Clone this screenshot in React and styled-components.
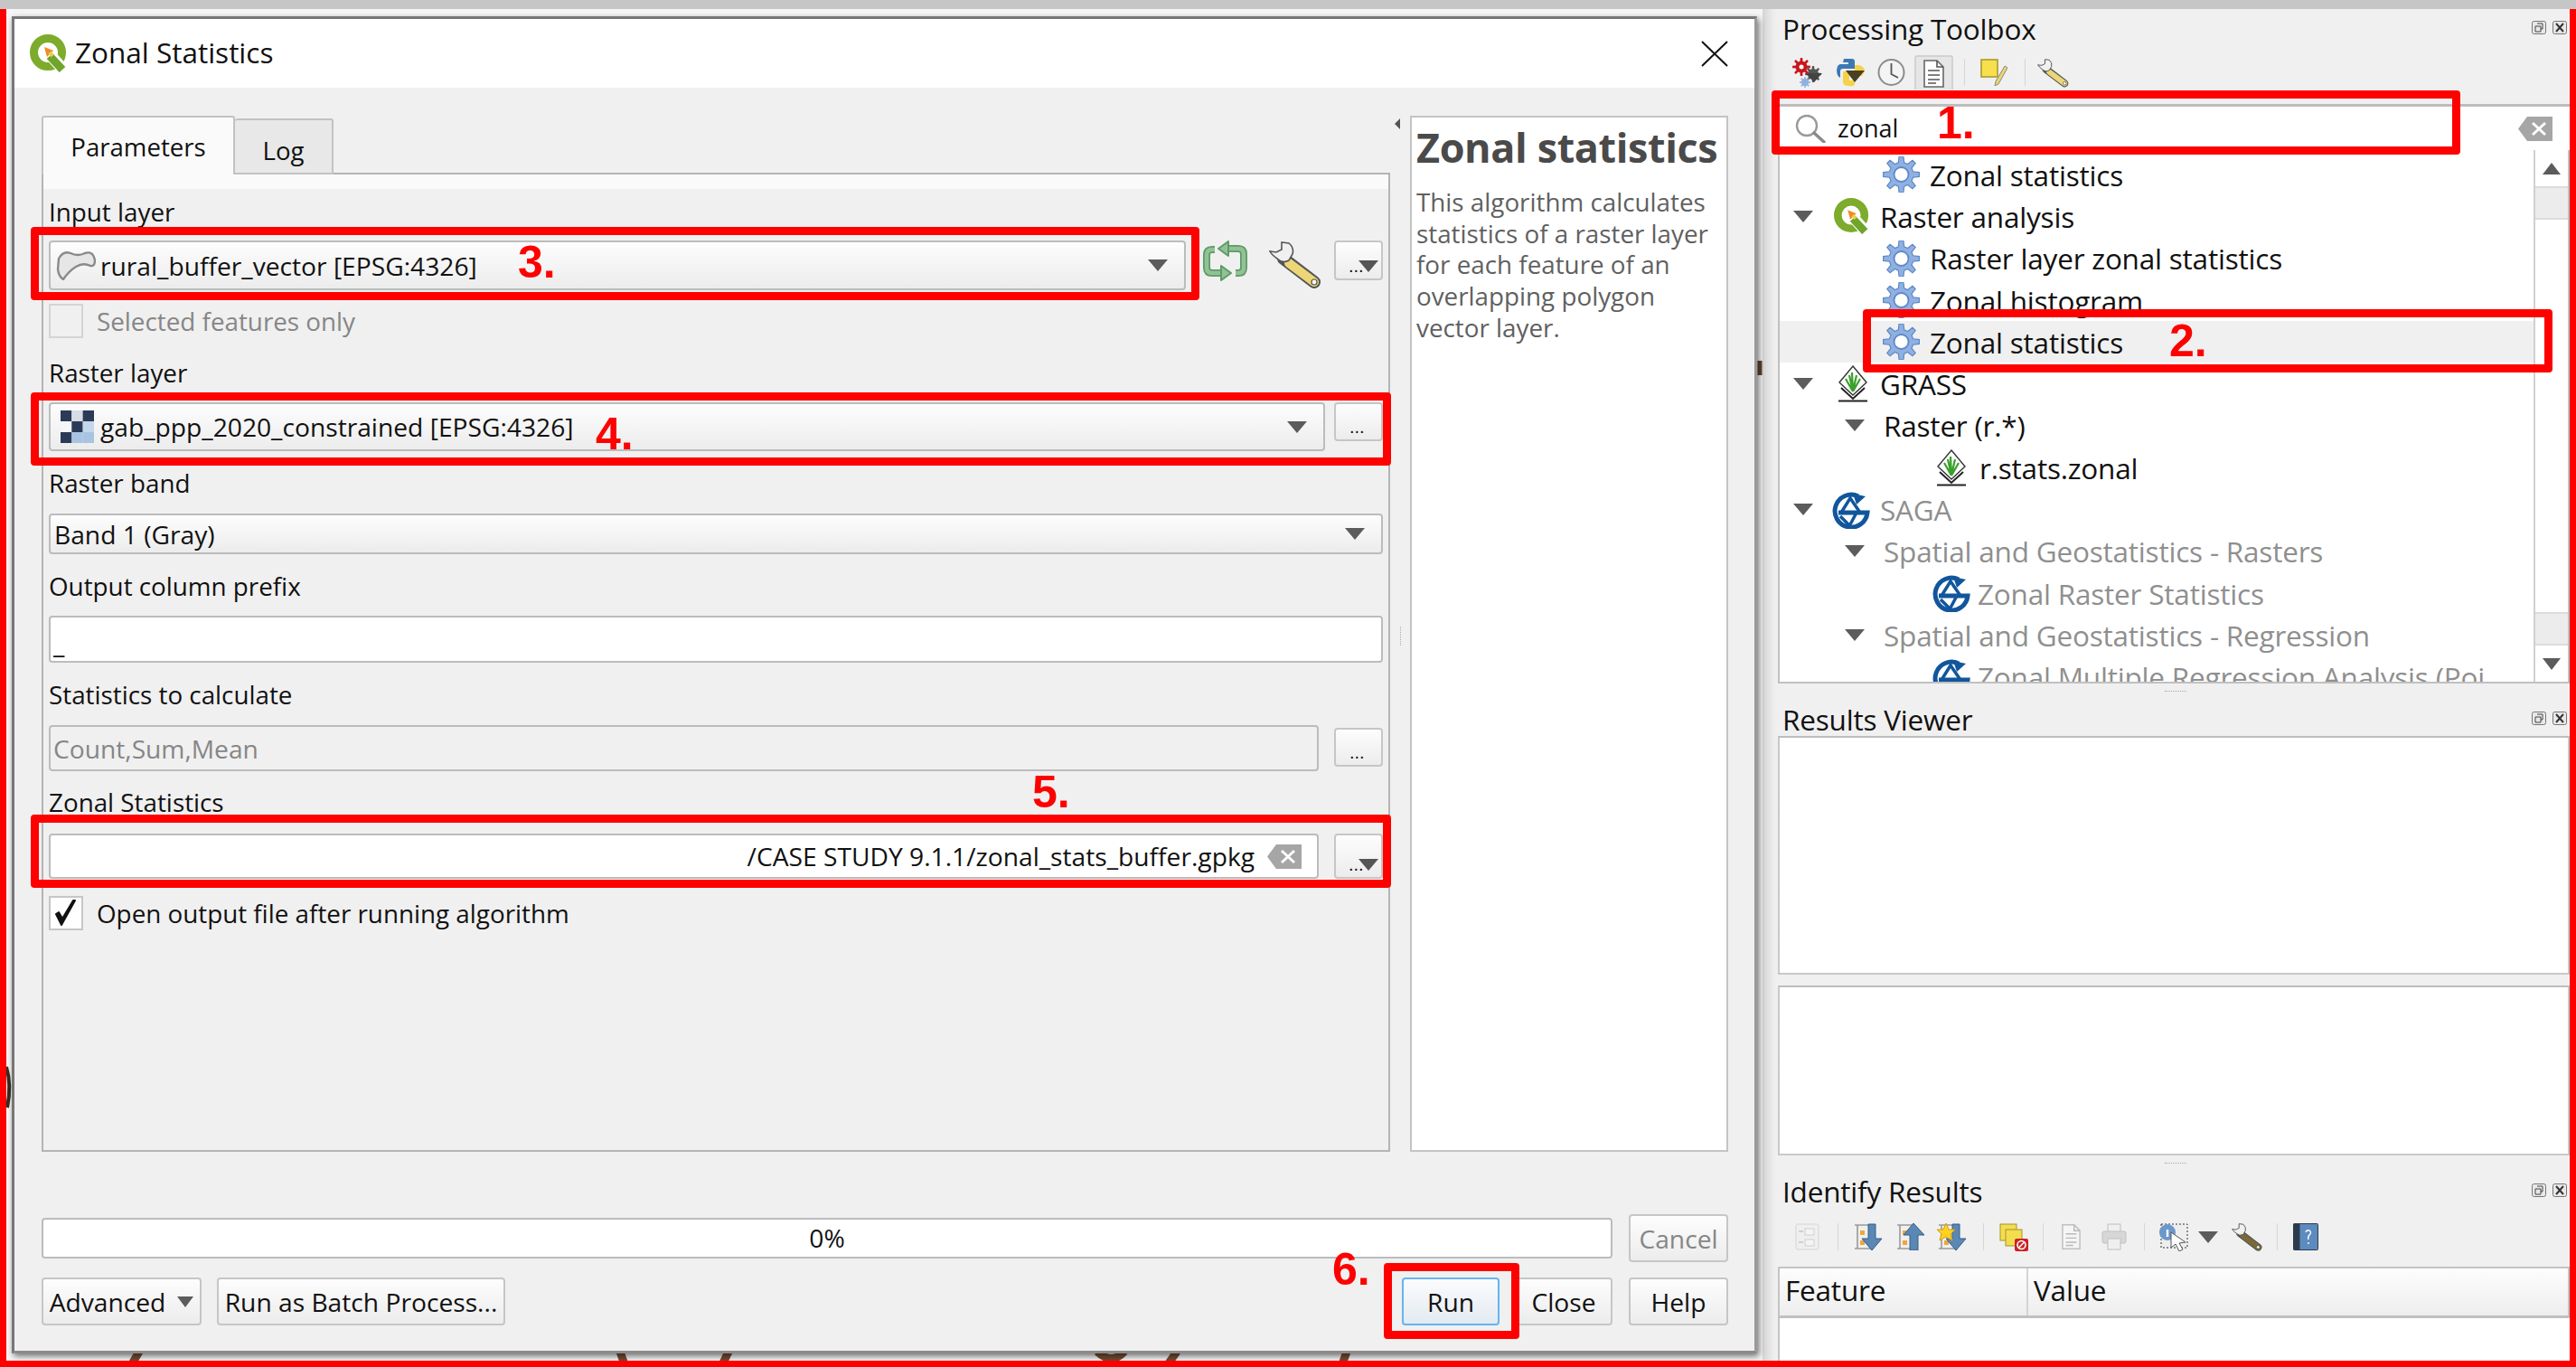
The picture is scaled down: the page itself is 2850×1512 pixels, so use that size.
import React from 'react';
import styled, { createGlobalStyle } from 'styled-components';

const GlobalStyle = createGlobalStyle`
    html, body {
        margin: 0;
        padding: 0;
        background: #fff;
    }
    * {
        box-sizing: border-box;
    }
`;

const FONT = '"Open Sans", "Noto Sans", "Liberation Sans", sans-serif';

const Screen = styled.div`
    position: relative;
    display: flex;
    width: 2850px;
    height: 1512px;
    overflow: hidden;
    border-top: 10px solid #c6c6c6;
    font-family: ${FONT};
    font-size: 28.2px;
    color: #111;
`;

/* map canvas with the dialog floating on it */
const Canvas = styled.div`
    position: relative;
    flex: 0 0 1950px;
    padding: 8px 0 0 13px;
    background: #f6f6f6;
`;

const MapSketch = styled.svg`
    position: absolute;
    left: 0;
    top: -10px;
`;

const Dialog = styled.div`
    position: relative;
    display: flex;
    flex-direction: column;
    width: 1931px;
    height: 1479px;
    border: 3px solid #777;
    border-right-color: #9a9a9a;
    border-bottom-color: #8a8a8a;
    box-shadow: 2px 3px 7px rgba(0, 0, 0, 0.55);
`;

const TitleBar = styled.div`
    display: flex;
    flex: 0 0 76px;
    align-items: center;
    padding: 0 29px 0 17px;
    background: #fff;
`;

const WindowTitle = styled.div`
    flex: 1;
    margin: -4px 0 0 8px;
    font-size: 31.5px;
`;

const DialogBody = styled.div`
    display: flex;
    flex: 1;
    flex-direction: column;
    padding: 31px 29px 0 30px;
    background: #f0f0f0;
`;

const MainRow = styled.div`
    display: flex;
    height: 1146px;
`;

const TabColumn = styled.div`
    display: flex;
    flex: 0 0 1492px;
    flex-direction: column;
`;

const TabBar = styled.div`
    display: flex;
    flex: 0 0 63px;
    align-items: flex-end;
`;

const Tab = styled.div`
    position: relative;
    z-index: 1;
    display: flex;
    align-items: center;
    justify-content: center;
    width: ${p => p.$w}px;
    height: ${p => (p.$active ? 65 : 62)}px;
    margin-bottom: -2px;
    padding-top: ${p => (p.$active ? 0 : 8)}px;
    border: 2px solid #c2c2c2;
    border-bottom: ${p => (p.$active ? 'none' : '2px solid #c2c2c2')};
    border-left: ${p => (p.$active ? '2px solid #c2c2c2' : 'none')};
    border-radius: 3px 3px 0 0;
    background: ${p => (p.$active ? '#fafafa' : '#e8e8e8')};
    font-size: 27.6px;
`;

const Pane = styled.div`
    display: flex;
    flex: 1;
    flex-direction: column;
    border: 2px solid #b4b4b4;
    background: #f0f0f0;
`;

const PaneTop = styled.div`
    flex: 0 0 16px;
    background: #fafafa;
`;

const PaneContent = styled.div`
    display: flex;
    flex-direction: column;
    padding: 0 6px;
`;

const Label = styled.div`
    height: 34px;
    margin-top: ${p => p.$mt}px;
    font-size: 27.8px;
    line-height: 32px;
    white-space: nowrap;
`;

const FieldRow = styled.div`
    display: flex;
    align-items: flex-start;
    margin-top: ${p => p.$mt}px;
`;

const Combo = styled.div`
    display: flex;
    flex: 1;
    align-items: center;
    height: ${p => p.$h}px;
    padding: 0 18px 0 ${p => p.$pad}px;
    border: 2px solid #bcbcbc;
    border-radius: 4px;
    background: linear-gradient(#fdfdfd, #ececec);
    white-space: nowrap;
`;

const ComboText = styled.span`
    flex: 1;
    margin-left: ${p => p.$ml || 0}px;
`;

const DownArrow = styled.div`
    flex: none;
    width: 0;
    height: 0;
    border-top: ${p => p.$h || 13}px solid #5c5c5c;
    border-left: ${p => (p.$w || 22) / 2}px solid transparent;
    border-right: ${p => (p.$w || 22) / 2}px solid transparent;
`;

const LineEdit = styled.div`
    display: flex;
    flex: 1;
    align-items: ${p => (p.$bottom ? 'flex-end' : 'center')};
    justify-content: ${p => (p.$right ? 'flex-end' : 'flex-start')};
    height: ${p => p.$h}px;
    padding: 0 ${p => (p.$right ? 17 : 3)}px 0 3px;
    border: 2px solid #bcbcbc;
    border-radius: 4px;
    background: ${p => (p.$disabled ? '#f0f0f0' : '#fff')};
    color: ${p => (p.$disabled ? '#868686' : '#111')};
    line-height: 38px;
    white-space: nowrap;
`;

const DotsButton = styled.div`
    position: relative;
    flex: 0 0 54px;
    height: ${p => p.$h}px;
    margin: ${p => p.$mt || 0}px 0 0 ${p => p.$ml || 0}px;
    border: 2px solid #c6c6c6;
    border-radius: 4px;
    background: linear-gradient(#fdfdfd, #ececec);
`;

const Dots = styled.span`
    position: absolute;
    left: ${p => (p.$menu ? 14 : 15)}px;
    bottom: 7px;
    font-family: "Liberation Sans", sans-serif;
    font-size: 20px;
    line-height: 14px;
`;

const MenuArrow = styled.div`
    position: absolute;
    right: 3px;
    bottom: 7px;
    width: 0;
    height: 0;
    border-top: 13px solid #555;
    border-left: 11px solid transparent;
    border-right: 11px solid transparent;
`;

const CheckRow = styled.div`
    display: flex;
    align-items: center;
    gap: 15px;
    margin-top: ${p => p.$mt}px;
    font-size: 27.8px;
    color: ${p => (p.$disabled ? '#868686' : '#111')};
`;

const CheckBox = styled.div`
    display: flex;
    align-items: center;
    justify-content: center;
    width: 38px;
    height: 38px;
    border: 2px solid ${p => (p.$disabled ? '#d4d4d4' : '#c6c6c6')};
    background: ${p => (p.$disabled ? '#f0f0f0' : '#fff')};
`;

const Splitter = styled.div`
    position: relative;
    flex: 0 0 22px;
`;

const CollapseArrow = styled.div`
    position: absolute;
    left: 5px;
    top: 3px;
    width: 0;
    height: 0;
    border-right: 6px solid #555;
    border-top: 6px solid transparent;
    border-bottom: 6px solid transparent;
`;

const GripColumn = styled.div`
    position: absolute;
    left: 11px;
    top: 565px;
    width: 1px;
    height: 21px;
    border-left: 1px dotted #aaa;
`;

const HelpPanel = styled.div`
    flex: 0 0 352px;
    padding: 10px 4px 0 5px;
    border: 2px solid #c4c4c4;
    background: #fff;
    color: #606060;
`;

const HelpTitle = styled.h2`
    margin: 0 0 20px;
    font-size: 45px;
    font-weight: 700;
    line-height: 46px;
    letter-spacing: -0.4px;
    color: #4a4a4a;
    white-space: nowrap;
`;

const HelpText = styled.p`
    margin: 0;
    line-height: 34.7px;
    font-size: 27.8px;
`;

const ProgressRow = styled.div`
    display: flex;
    align-items: center;
    gap: 18px;
    margin-top: 69px;
`;

const Progress = styled.div`
    flex: 1;
    height: 45px;
    border: 2px solid #bcbcbc;
    border-radius: 4px;
    background: #fff;
    line-height: 41px;
    text-align: center;
`;

const ButtonRow = styled.div`
    display: flex;
    gap: 17px;
    margin-top: 17px;
`;

const Spacer = styled.div`
    flex: 1;
`;

const Button = styled.div`
    display: flex;
    flex: 0 0 ${p => p.$w}px;
    align-items: center;
    justify-content: center;
    gap: 13px;
    height: ${p => p.$h || 53}px;
    margin-right: ${p => p.$mr || 0}px;
    border: 2px solid ${p => (p.$primary ? '#66b4f0' : '#c6c6c6')};
    border-radius: 4px;
    background: ${p => (p.$primary ? 'linear-gradient(#fbfcfd, #e3eaf1)' : 'linear-gradient(#fdfdfd, #ececec)')};
    color: ${p => (p.$disabled ? '#868686' : '#111')};
    white-space: nowrap;
`;

/* docked panels on the right */
const Dock = styled.div`
    display: flex;
    flex: 1;
    flex-direction: column;
    padding: 0 7px 0 17px;
    background: linear-gradient(90deg, #d6d6d6 0, #ececec 12px, #f0f0f0 16px);
    font-size: 31.5px;
    letter-spacing: -0.2px;
`;

const DockTitle = styled.div`
    display: flex;
    flex: 0 0 ${p => p.$h}px;
    align-items: center;
    justify-content: space-between;
    padding: ${p => p.$pt || 0}px 3px 0 5px;
    line-height: 34px;
`;

const DockTitleText = styled.span`
    margin-top: -2px;
`;

const FloatButtons = styled.div`
    display: flex;
    gap: 7px;
    margin-top: -6px;
`;

const ToolBar = styled.div`
    display: flex;
    flex: 0 0 ${p => p.$h}px;
    align-items: center;
    margin-top: ${p => p.$mt}px;
    margin-left: -17px;
    padding-left: ${p => p.$pad}px;
`;

const ToolSlot = styled.div`
    display: flex;
    flex: none;
    align-items: center;
    justify-content: center;
    margin-left: ${p => p.$ml || 0}px;
`;

const ToolActive = styled(ToolSlot)`
    width: 43px;
    height: 38px;
    border: 2px solid #d2d2d2;
    border-bottom: none;
    border-radius: 3px 3px 0 0;
    background: #e6e6e6;
`;

const ToolSep = styled.div`
    flex: none;
    width: 1px;
    height: 30px;
    margin-left: ${p => p.$ml}px;
    background: #d6d6d6;
`;

const SearchBox = styled.div`
    display: flex;
    flex: 0 0 51px;
    align-items: center;
    margin-top: 16px;
    padding: 0 19px;
    border-top: 3px solid #bdbdbd;
    background: #fff;
`;

const SearchText = styled.span`
    flex: 1;
    margin: -2px 0 0 13px;
    font-size: 27px;
    letter-spacing: 0;
`;

const Tree = styled.div`
    display: flex;
    flex: none;
    height: 590px;
    min-height: 0;
    overflow: hidden;
    border: 2px solid #c0c0c0;
    border-top: none;
    background: #fff;
`;

const TreeList = styled.div`
    flex: 1;
    min-width: 0;
    height: 100%;
    padding-top: 4px;
    overflow: hidden;
`;

const TreeRow = styled.div`
    display: flex;
    align-items: center;
    gap: ${p => p.$gap}px;
    height: 46.3px;
    padding-left: ${p => p.$pad}px;
    background: ${p => (p.$selected ? '#f0f0f0' : 'transparent')};
    color: ${p => (p.$muted ? '#8f8f8f' : '#111')};
    white-space: nowrap;
`;

const TreeLabel = styled.span`
    margin-left: ${p => p.$ml}px;
`;

const ScrollBar = styled.div`
    display: flex;
    flex: 0 0 38px;
    flex-direction: column;
    border-left: 2px solid #d0d0d0;
`;

const ScrollEnd = styled.div`
    display: flex;
    flex: 0 0 40px;
    align-items: center;
    justify-content: center;
`;

const UpArrow = styled.div`
    width: 0;
    height: 0;
    border-bottom: 13px solid #5c5c5c;
    border-left: 10px solid transparent;
    border-right: 10px solid transparent;
`;

const ScrollThumb = styled.div`
    flex: 0 0 ${p => p.$h}px;
    border-top: 2px solid #dcdcdc;
    border-bottom: 2px solid #dcdcdc;
    background: #ececec;
`;

const ScrollTrack = styled.div`
    flex: 1;
`;

const Grip = styled.div`
    flex: 0 0 18px;
    padding-top: 8px;
    padding-left: 428px;
    font-size: 0;
`;

const GripDots = styled.div`
    width: 24px;
    border-top: 1px dotted #aaa;
`;

const WhitePanel = styled.div`
    flex: 0 0 ${p => p.$h}px;
    margin-top: ${p => p.$mt || 0}px;
    border: 2px solid #c8c8c8;
    border-top-color: #bdbdbd;
    background: #fff;
`;

const TableHead = styled.div`
    display: flex;
    flex: 0 0 57px;
    margin-top: 13px;
    border: 2px solid #c4c4c4;
    border-bottom: 3px solid #c0c0c0;
    background: linear-gradient(#fdfdfd, #eeeeee);
`;

const HeadCell = styled.div`
    flex: ${p => (p.$w ? `0 0 ${p.$w}px` : 1)};
    padding: 2px 0 0 6px;
    border-right: ${p => (p.$w ? '2px solid #d4d4d4' : 'none')};
    line-height: 44px;
`;

const TableBody = styled.div`
    flex: 1;
    border-left: 2px solid #c4c4c4;
    background: #fff;
`;

/* red annotations lying over the screenshot */
const RedFrame = styled.div`
    position: absolute;
    inset: -10px 0 0 0;
    z-index: 5;
    border: 7px solid #ff0000;
    pointer-events: none;
`;

const RedBox = styled.div`
    position: absolute;
    z-index: 6;
    left: ${p => p.$x}px;
    top: ${p => p.$y - 10}px;
    width: ${p => p.$w}px;
    height: ${p => p.$h}px;
    border: 9px solid #ff0000;
    border-radius: 4px;
`;

const RedNumber = styled.div`
    position: absolute;
    z-index: 6;
    left: ${p => p.$x}px;
    top: ${p => p.$y - 10}px;
    font-family: "Liberation Sans", sans-serif;
    font-size: 50px;
    font-weight: 700;
    line-height: 50px;
    color: #ff0000;
`;

const gearPath = (cx, cy, ro, ri, teeth) => {
    let d = '';
    const step = (Math.PI * 2) / teeth;
    for (let i = 0; i < teeth; i++) {
        const a = i * step - Math.PI / 2;
        const pts = [
            [ri, a - step * 0.3],
            [ro, a - step * 0.15],
            [ro, a + step * 0.15],
            [ri, a + step * 0.3],
        ];
        pts.forEach(([r, t], j) => {
            const x = (cx + r * Math.cos(t)).toFixed(1);
            const y = (cy + r * Math.sin(t)).toFixed(1);
            d += `${i === 0 && j === 0 ? 'M' : 'L'}${x} ${y} `;
        });
    }
    return d + 'Z';
};

const BlueGear = () => (
    <svg width="41" height="40" viewBox="0 0 41 40">
        <path d={gearPath(20.5, 20, 20, 13.5, 8)} fill="#8fb0e2" stroke="#5f88c6" strokeWidth="1.2" />
        <circle cx="20.5" cy="20" r="8" fill="#fff" stroke="#5f88c6" strokeWidth="1.8" />
    </svg>
);

const QgisIcon = ({ size = 42 }) => (
    <svg width={size} height={size} viewBox="0 0 42 42">
        <circle cx="20" cy="20" r="15.5" fill="none" stroke="#7dab2b" strokeWidth="9" />
        <path d="M20 20 L37 39" stroke="#fff" strokeWidth="13" />
        <path d="M22 24 L36 39" stroke="#6fa52c" strokeWidth="9" />
        <path d="M16 14 L26 18 L19 25 Z" fill="#f08a24" />
        <path d="M22 20 L25 24" stroke="#e8d24a" strokeWidth="4" />
    </svg>
);

const GrassIcon = () => (
    <svg width="34" height="41" viewBox="0 0 34 41">
        <path d="M17 1 L32 19 L17 33 L2 19 Z" fill="#fff" stroke="#333" strokeWidth="1.4" />
        <path d="M17 29 L16 8 M17 29 L9 15 M17 29 L25 15 M17 29 L13 11 M17 29 L21 11" stroke="#3aa02c" strokeWidth="2.2" />
        <path d="M4 25 L17 37 L30 25" fill="none" stroke="#222" strokeWidth="2" />
        <path d="M1 39.5 H33" stroke="#222" strokeWidth="2" />
    </svg>
);

const SagaIcon = ({ width = 43 }) => (
    <svg width={width} height="42" viewBox="0 0 43 42">
        <path d="M30 6 A18 18 0 1 0 40 24 H8" fill="none" stroke="#11569c" strokeWidth="5" />
        <path d="M24 3 L38 6 L28 15 Z" fill="#11569c" />
        <path d="M11 24 L21 8 L32 24 M10 28 L22 40 M28 24 L20 39" fill="none" stroke="#11569c" strokeWidth="3.5" />
    </svg>
);

const Wrench = ({ width = 58, height = 53, dark }) => (
    <svg width={width} height={height} viewBox="0 0 58 53">
        <path d="M16 20 L50 46" stroke="#555" strokeWidth="14" strokeLinecap="round" />
        <path d="M22 25 L50 46" stroke={dark ? '#7a6a35' : '#ecd678'} strokeWidth="10" strokeLinecap="round" />
        <circle cx="50" cy="46" r="3" fill="#fff" stroke="#555" strokeWidth="1.2" />
        <path d="M14 2 L22 3 Q28 8 26 15 L22 22 Q15 26 9 20 Q3 16 1 12 L8 13 L14 10 L14 2 Z" fill="#f0f0f0" stroke="#555" strokeWidth="1.6" />
    </svg>
);

const RefreshIcon = () => (
    <svg width="51" height="45" viewBox="0 0 51 45">
        <g fill="none" stroke="#5f9a68" strokeWidth="8" strokeLinejoin="round">
            <path d="M20 36 H11 Q5 36 5 30 V16 Q5 10 11 10 H14" />
            <path d="M30 9 H40 Q46 9 46 15 V30 Q46 36 40 36 H37" />
        </g>
        <g fill="none" stroke="#90c295" strokeWidth="4.5" strokeLinejoin="round">
            <path d="M20 36 H11 Q5 36 5 30 V16 Q5 10 11 10 H14" />
            <path d="M30 9 H40 Q46 9 46 15 V30 Q46 36 40 36 H37" />
        </g>
        <path d="M29 1 L18 9 L29 17 Z" fill="#90c295" stroke="#5f9a68" strokeWidth="2" strokeLinejoin="round" />
        <path d="M21 28 L32 36 L21 44 Z" fill="#90c295" stroke="#5f9a68" strokeWidth="2" strokeLinejoin="round" />
    </svg>
);

const PolygonIcon = () => (
    <svg width="44" height="32" viewBox="0 0 44 32">
        <path d="M3 8 Q8 -1 16 2 Q24 6 32 2 Q41 -1 43 10 Q43 17 38 16 Q30 12 22 17 Q14 22 8 31 Q3 28 2 20 Z" fill="#e6e6e6" stroke="#8a8a8a" strokeWidth="2.4" />
    </svg>
);

const RasterIcon = () => {
    const cells = ['#2b3b57', '#d8dde4', '#2b3b57', '#f4f6f9', '#2b3b57', '#c4d6ea', '#2b3b57', '#a9c4e2', '#a9c4e2'];
    return (
        <svg width="44" height="36" viewBox="0 0 44 36">
            {cells.map((c, i) => (
                <rect key={i} x={5 + (i % 3) * 12.3} y={Math.floor(i / 3) * 12} width="12.4" height="12" fill={c} />
            ))}
        </svg>
    );
};

const Tick = () => (
    <svg width="28" height="30" viewBox="0 0 28 30">
        <path d="M3 16 L9 28 L24 1 L22 1 L10 21 L6 14 Z" fill="#111" stroke="#111" strokeWidth="2" strokeLinejoin="round" />
    </svg>
);

const CloseX = () => (
    <svg width="30" height="29" viewBox="0 0 30 29">
        <path d="M1 1 L29 28 M29 1 L1 28" stroke="#111" strokeWidth="2" />
    </svg>
);

const ClearIcon = () => (
    <svg width="38" height="27" viewBox="0 0 38 27">
        <path d="M10 0 H38 V27 H10 L0 13.5 Z" fill="#a6a6a6" />
        <path d="M16 7 L30 20 M30 7 L16 20" stroke="#fff" strokeWidth="3" />
    </svg>
);

const FloatIcon = ({ close }) => (
    <svg width="16" height="15" viewBox="0 0 16 15">
        <rect x="0.5" y="0.5" width="15" height="14" rx="2" fill="#e8e8e8" stroke="#777" />
        {close
            ? <path d="M4 3 L12 12 M12 3 L4 12" stroke="#333" strokeWidth="2" />
            : <path d="M6 3 H12 V9 H10 M4 6 H10 V12 H4 Z" fill="none" stroke="#444" />}
    </svg>
);

const ModelsIcon = () => (
    <svg width="34" height="33" viewBox="0 0 34 33">
        <path d={gearPath(24, 18, 9, 6, 8)} fill="#555" />
        <path d="M16 17 H34 L25 27 Z" fill="#444" />
        <path d={gearPath(11, 10, 10, 6.5, 8)} fill="#c8161d" />
        <circle cx="11" cy="10" r="2.5" fill="#fff" />
        <path d={gearPath(15, 27, 6, 4, 8)} fill="#8fb0e0" />
    </svg>
);

const PythonIcon = () => (
    <svg width="31" height="32" viewBox="0 0 31 32">
        <path d="M8 1 H17 Q20 1 20 4 V12 H7 Q4 12 4 15 V22 Q0 20 0 14 Q0 8 4 7 H13 V5 H7 Z" fill="#3c78b5" />
        <path d="M20 8 H25 Q31 10 31 15 L28 20 H14 V25 H20 V28 Q20 32 14 31 Q6 31 7 26 V15 H20 Z" fill="#f6d24a" />
        <path d="M10 14 H31 L20 27 Z" fill="#4a4020" />
    </svg>
);

const ClockIcon = () => (
    <svg width="31" height="32" viewBox="0 0 31 32">
        <circle cx="15.5" cy="16" r="14" fill="#f4f4f4" stroke="#8c8c8c" strokeWidth="2" />
        <path d="M15.5 6 V18 L23 22" fill="none" stroke="#555" strokeWidth="1.8" />
    </svg>
);

const DocIcon = ({ width = 23, height = 31, faded }) => (
    <svg width={width} height={height} viewBox="0 0 23 31" opacity={faded ? 0.35 : 1}>
        <path d="M1 1 H15 L22 8 V30 H1 Z" fill="#fff" stroke="#666" strokeWidth="1.6" />
        <path d="M15 1 V8 H22 M5 12 H18 M5 17 H18 M5 22 H18 M5 26 H14" fill="none" stroke="#555" strokeWidth="1.6" />
    </svg>
);

const NoteIcon = () => (
    <svg width="30" height="30" viewBox="0 0 30 30">
        <rect x="1" y="1" width="18" height="19" fill="#f8e04c" stroke="#a99a30" strokeWidth="1.6" />
        <path d="M17 25 L27 8 L30 10 L20 28 L16 30 Z" fill="#e9d76a" stroke="#888" />
    </svg>
);

const TreeExpandIcon = () => (
    <svg width="27" height="30" viewBox="0 0 27 30" opacity="0.3">
        <rect x="1" y="1" width="25" height="28" rx="2" fill="#eee" stroke="#999" />
        <rect x="11" y="6" width="10" height="7" fill="#fff" stroke="#888" />
        <rect x="11" y="18" width="10" height="7" fill="#fff" stroke="#888" />
        <path d="M4 9 H9 M4 21 H9" stroke="#888" strokeWidth="2" />
    </svg>
);

const ArrowTreeIcon = ({ up, star }) => (
    <svg width="33" height="30" viewBox="0 0 33 30">
        <path d="M2 2 H20 M5 2 V28 M2 28 H20" fill="none" stroke="#999" strokeWidth="1.6" />
        <rect x="8" y="8" width="5" height="5" fill="#f0a63a" />
        <rect x="8" y="19" width="5" height="5" fill="#f0a63a" />
        {up
            ? <path d="M20 0 L32 13 H25 V30 H16 V13 H9 Z" fill="#5b87b4" stroke="#355f88" />
            : <path d="M17 1 H25 V17 H32 L21 30 L10 17 H17 Z" fill="#5b87b4" stroke="#355f88" />}
        {star && <path d="M10 0 L13 7 L20 7 L15 12 L17 19 L10 15 L3 19 L5 12 L0 7 L7 7 Z" fill="#ffd21f" stroke="#d49b12" />}
    </svg>
);

const CopyYellowIcon = () => (
    <svg width="32" height="31" viewBox="0 0 32 31">
        <rect x="1" y="1" width="18" height="18" fill="#f4dd4e" stroke="#a5922c" />
        <rect x="7" y="7" width="18" height="18" fill="#f4dd4e" stroke="#a5922c" />
        <rect x="17" y="17" width="15" height="14" rx="2" fill="#cc2026" />
        <circle cx="24.5" cy="24" r="4.5" fill="none" stroke="#fff" strokeWidth="1.6" />
        <path d="M21.5 27 L27.5 21" stroke="#fff" strokeWidth="1.6" />
    </svg>
);

const PrintIcon = () => (
    <svg width="28" height="30" viewBox="0 0 28 30" opacity="0.45">
        <rect x="7" y="1" width="14" height="9" fill="#eee" stroke="#888" />
        <rect x="1" y="9" width="26" height="13" rx="2" fill="#bbb" stroke="#888" />
        <rect x="7" y="17" width="14" height="12" fill="#eee" stroke="#888" />
    </svg>
);

const IdentifyIcon = () => (
    <svg width="33" height="32" viewBox="0 0 33 32">
        <rect x="2" y="2" width="29" height="26" fill="#eee" stroke="#333" strokeDasharray="2 2" />
        <circle cx="9" cy="11" r="9" fill="#6b98cc" />
        <path d="M9 8 V16" stroke="#fff" strokeWidth="2.4" />
        <path d="M13 11 L13 28 L18 24 L22 32 L26 30 L22 23 L29 22 Z" fill="#fff" stroke="#555" />
    </svg>
);

const HelpBook = () => (
    <svg width="28" height="30" viewBox="0 0 28 30">
        <rect x="0.5" y="0.5" width="27" height="29" rx="1" fill="#5d8bc0" stroke="#2c3b4c" />
        <rect x="0.5" y="0.5" width="7" height="29" fill="#2c3b4c" />
        <path d="M14 10 Q15 7 18 8 Q21 10 18 13 Q16 15 17 18 M17 21 V23" fill="none" stroke="#fff" strokeWidth="1.4" />
    </svg>
);

const SearchIcon = () => (
    <svg width="34" height="32" viewBox="0 0 34 32">
        <circle cx="13" cy="13" r="11" fill="none" stroke="#9a9a9a" strokeWidth="2.4" />
        <path d="M21 21 L32 31" stroke="#8a8a8a" strokeWidth="3.4" strokeLinecap="round" />
    </svg>
);

const App = () => (
    <Screen>
        <GlobalStyle />
        <Canvas>
            <MapSketch width="1950" height="1512" viewBox="0 0 1950 1512">
                <g fill="none" stroke="#7a4b32" strokeWidth="9">
                    <path d="M154 1495 L144 1512" />
                    <path d="M686 1495 L692 1512" />
                    <path d="M806 1495 L798 1512" />
                    <path d="M1214 1495 Q1230 1510 1244 1495" />
                    <path d="M1302 1495 L1290 1512" />
                    <path d="M1490 1495 L1484 1512" />
                </g>
                <path d="M7 1180 Q13 1200 8 1225" fill="none" stroke="#3a2a20" strokeWidth="4" />
                <path d="M1947 399 V415" stroke="#5a4436" strokeWidth="5" />
            </MapSketch>
            <Dialog>
                <TitleBar>
                    <QgisIcon />
                    <WindowTitle>Zonal Statistics</WindowTitle>
                    <CloseX />
                </TitleBar>
                <DialogBody>
                    <MainRow>
                        <TabColumn>
                            <TabBar>
                                <Tab $active $w={214}>Parameters</Tab>
                                <Tab $w={109}>Log</Tab>
                            </TabBar>
                            <Pane>
                                <PaneTop />
                                <PaneContent>
                                    <Label $mt={9}>Input layer</Label>
                                    <FieldRow $mt={14}>
                                        <Combo $h={55} $pad={6}>
                                            <PolygonIcon />
                                            <ComboText $ml={5}>rural_buffer_vector [EPSG:4326]</ComboText>
                                            <DownArrow />
                                        </Combo>
                                        <ToolSlot $ml={18}><RefreshIcon /></ToolSlot>
                                        <ToolSlot $ml={23}><Wrench /></ToolSlot>
                                        <DotsButton $h={44} $ml={14}>
                                            <Dots $menu>...</Dots>
                                            <MenuArrow />
                                        </DotsButton>
                                    </FieldRow>
                                    <CheckRow $disabled $mt={15}>
                                        <CheckBox $disabled />
                                        Selected features only
                                    </CheckRow>
                                    <Label $mt={22}>Raster layer</Label>
                                    <FieldRow $mt={15}>
                                        <Combo $h={54} $pad={6}>
                                            <RasterIcon />
                                            <ComboText $ml={5}>gab_ppp_2020_constrained [EPSG:4326]</ComboText>
                                            <DownArrow />
                                        </Combo>
                                        <DotsButton $h={43} $ml={10}><Dots>...</Dots></DotsButton>
                                    </FieldRow>
                                    <Label $mt={19}>Raster band</Label>
                                    <FieldRow $mt={16}>
                                        <Combo $h={45} $pad={4}>
                                            <ComboText>Band 1 (Gray)</ComboText>
                                            <DownArrow />
                                        </Combo>
                                    </FieldRow>
                                    <Label $mt={19}>Output column prefix</Label>
                                    <FieldRow $mt={15}>
                                        <LineEdit $h={52} $bottom>_</LineEdit>
                                    </FieldRow>
                                    <Label $mt={19}>Statistics to calculate</Label>
                                    <FieldRow $mt={16}>
                                        <LineEdit $h={51} $disabled>Count,Sum,Mean</LineEdit>
                                        <DotsButton $h={43} $ml={17} $mt={3}><Dots>...</Dots></DotsButton>
                                    </FieldRow>
                                    <Label $mt={18}>Zonal Statistics</Label>
                                    <FieldRow $mt={17}>
                                        <LineEdit $h={50} $right>
                                            /CASE STUDY 9.1.1/zonal_stats_buffer.gpkg
                                            <ToolSlot $ml={14}><ClearIcon /></ToolSlot>
                                        </LineEdit>
                                        <DotsButton $h={50} $ml={17}>
                                            <Dots $menu>...</Dots>
                                            <MenuArrow />
                                        </DotsButton>
                                    </FieldRow>
                                    <CheckRow $mt={19}>
                                        <CheckBox><Tick /></CheckBox>
                                        Open output file after running algorithm
                                    </CheckRow>
                                </PaneContent>
                            </Pane>
                        </TabColumn>
                        <Splitter>
                            <CollapseArrow />
                            <GripColumn />
                        </Splitter>
                        <HelpPanel>
                            <HelpTitle>Zonal statistics</HelpTitle>
                            <HelpText>
                                This algorithm calculates statistics of a raster layer for each feature of an overlapping polygon vector layer.
                            </HelpText>
                        </HelpPanel>
                    </MainRow>
                    <ProgressRow>
                        <Progress>0%</Progress>
                        <Button $w={110} $disabled>Cancel</Button>
                    </ProgressRow>
                    <ButtonRow>
                        <Button $w={177}>Advanced<DownArrow $w={18} $h={12} /></Button>
                        <Button $w={319}>Run as Batch Process...</Button>
                        <Spacer />
                        <Button $w={108} $primary>Run</Button>
                        <Button $w={108} $mr={1}>Close</Button>
                        <Button $w={110}>Help</Button>
                    </ButtonRow>
                </DialogBody>
            </Dialog>
        </Canvas>

        <Dock>
            <DockTitle $h={46}>
                <DockTitleText>Processing Toolbox</DockTitleText>
                <FloatButtons><FloatIcon /><FloatIcon close /></FloatButtons>
            </DockTitle>
            <ToolBar $h={38} $mt={5} $pad={32}>
                <ModelsIcon />
                <ToolSlot $ml={16}><PythonIcon /></ToolSlot>
                <ToolSlot $ml={14}><ClockIcon /></ToolSlot>
                <ToolActive $ml={10}><DocIcon /></ToolActive>
                <ToolSep $ml={12} />
                <ToolSlot $ml={17}><NoteIcon /></ToolSlot>
                <ToolSep $ml={19} />
                <ToolSlot $ml={13}><Wrench width={35} height={33} /></ToolSlot>
            </ToolBar>
            <SearchBox>
                <SearchIcon />
                <SearchText>zonal</SearchText>
                <ClearIcon />
            </SearchBox>
            <Tree>
                <TreeList>
                    <TreeRow $pad={114} $gap={11}><BlueGear />Zonal statistics</TreeRow>
                    <TreeRow $pad={15} $gap={23}>
                        <DownArrow />
                        <QgisIcon size={40} />
                        <TreeLabel $ml={-12}>Raster analysis</TreeLabel>
                    </TreeRow>
                    <TreeRow $pad={114} $gap={11}><BlueGear />Raster layer zonal statistics</TreeRow>
                    <TreeRow $pad={114} $gap={11}><BlueGear />Zonal histogram</TreeRow>
                    <TreeRow $pad={114} $gap={11} $selected><BlueGear />Zonal statistics</TreeRow>
                    <TreeRow $pad={15} $gap={27}>
                        <DownArrow />
                        <GrassIcon />
                        <TreeLabel $ml={-14}>GRASS</TreeLabel>
                    </TreeRow>
                    <TreeRow $pad={72} $gap={21}><DownArrow />Raster (r.*)</TreeRow>
                    <TreeRow $pad={173} $gap={14}><GrassIcon />r.stats.zonal</TreeRow>
                    <TreeRow $pad={15} $gap={20} $muted>
                        <DownArrow />
                        <SagaIcon />
                        <TreeLabel $ml={-9}>SAGA</TreeLabel>
                    </TreeRow>
                    <TreeRow $pad={72} $gap={21} $muted><DownArrow />Spatial and Geostatistics - Rasters</TreeRow>
                    <TreeRow $pad={168} $gap={8} $muted><SagaIcon />Zonal Raster Statistics</TreeRow>
                    <TreeRow $pad={72} $gap={21} $muted><DownArrow />Spatial and Geostatistics - Regression</TreeRow>
                    <TreeRow $pad={168} $gap={8} $muted><SagaIcon />Zonal Multiple Regression Analysis (Poi...</TreeRow>
                </TreeList>
                <ScrollBar>
                    <ScrollEnd><UpArrow /></ScrollEnd>
                    <ScrollThumb $h={37} />
                    <ScrollTrack />
                    <ScrollThumb $h={37} />
                    <ScrollEnd><DownArrow $w={20} /></ScrollEnd>
                </ScrollBar>
            </Tree>
            <Grip><GripDots /></Grip>
            <DockTitle $h={40} $pt={6}>
                <DockTitleText>Results Viewer</DockTitleText>
                <FloatButtons><FloatIcon /><FloatIcon close /></FloatButtons>
            </DockTitle>
            <WhitePanel $h={264} />
            <WhitePanel $h={188} $mt={12} />
            <Grip><GripDots /></Grip>
            <DockTitle $h={46}>
                <DockTitleText>Identify Results</DockTitleText>
                <FloatButtons><FloatIcon /><FloatIcon close /></FloatButtons>
            </DockTitle>
            <ToolBar $h={40} $mt={6} $pad={36}>
                <TreeExpandIcon />
                <ToolSep $ml={20} />
                <ToolSlot $ml={16}><ArrowTreeIcon /></ToolSlot>
                <ToolSlot $ml={14}><ArrowTreeIcon up /></ToolSlot>
                <ToolSlot $ml={13}><ArrowTreeIcon star /></ToolSlot>
                <ToolSep $ml={18} />
                <ToolSlot $ml={17}><CopyYellowIcon /></ToolSlot>
                <ToolSep $ml={16} />
                <ToolSlot $ml={20}><DocIcon width={21} height={30} faded /></ToolSlot>
                <ToolSlot $ml={23}><PrintIcon /></ToolSlot>
                <ToolSep $ml={19} />
                <ToolSlot $ml={16}><IdentifyIcon /></ToolSlot>
                <ToolSlot $ml={10}><DownArrow $h={13} /></ToolSlot>
                <ToolSlot $ml={15}><Wrench width={34} height={32} dark /></ToolSlot>
                <ToolSep $ml={16} />
                <ToolSlot $ml={17}><HelpBook /></ToolSlot>
            </ToolBar>
            <TableHead>
                <HeadCell $w={275}>Feature</HeadCell>
                <HeadCell>Value</HeadCell>
            </TableHead>
            <TableBody />
        </Dock>

        <RedFrame />
        <RedBox $x={1960} $y={100} $w={762} $h={71} />
        <RedNumber $x={2143} $y={111}>1.</RedNumber>
        <RedBox $x={2061} $y={342} $w={763} $h={70} />
        <RedNumber $x={2400} $y={352}>2.</RedNumber>
        <RedBox $x={34} $y={251} $w={1293} $h={81} />
        <RedNumber $x={573} $y={265}>3.</RedNumber>
        <RedBox $x={34} $y={434} $w={1505} $h={81} />
        <RedNumber $x={659} $y={455}>4.</RedNumber>
        <RedNumber $x={1142} $y={851}>5.</RedNumber>
        <RedBox $x={34} $y={901} $w={1505} $h={81} />
        <RedNumber $x={1474} $y={1379}>6.</RedNumber>
        <RedBox $x={1531} $y={1397} $w={150} $h={84} />
    </Screen>
);

export default App;
